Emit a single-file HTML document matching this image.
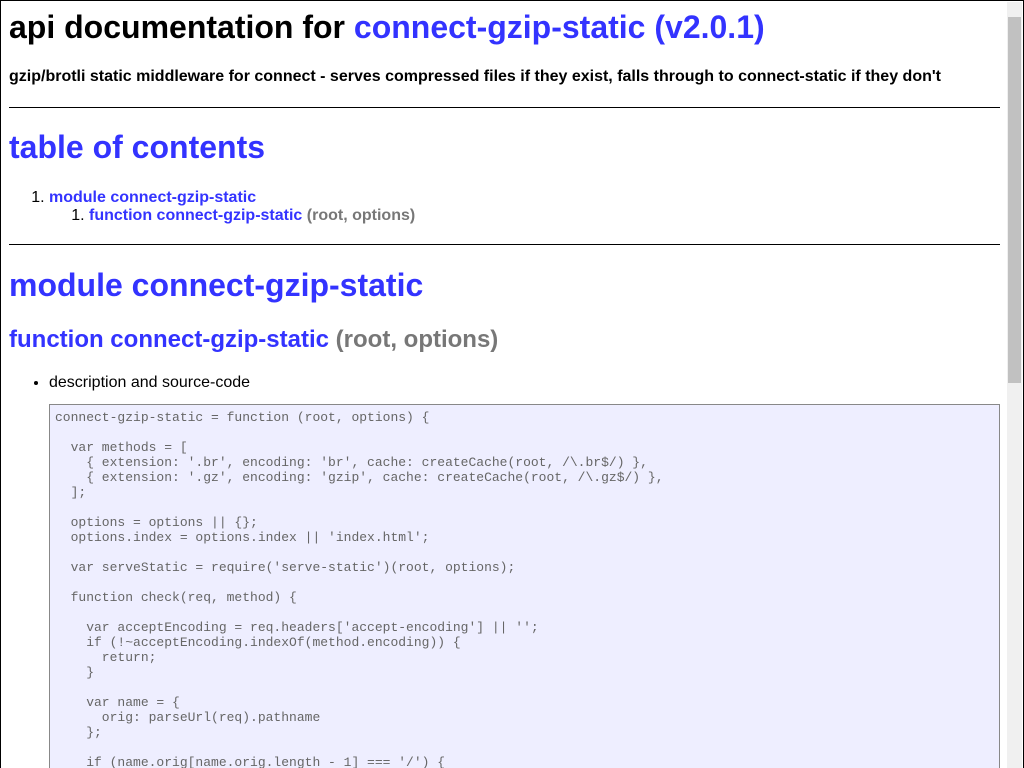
<!DOCTYPE html>
<html><head><meta charset="utf-8"><style>
html,body{margin:0;padding:0;overflow:hidden;background:#fff;width:1024px;height:768px}
#frame{position:absolute;left:0;top:0;width:1022px;height:767px;border:1px solid #000;border-bottom:none;overflow:hidden}
#content{position:absolute;left:8px;top:0;width:991px;font-family:"Liberation Sans",sans-serif;color:#000}
a{color:#33f;text-decoration:none;font-weight:bold}
.g{color:#777;font-weight:bold}
h1{font-size:32px;line-height:37px;margin:0;font-weight:bold}
.sub{font-size:16px;font-weight:bold;line-height:18px;margin:22px 0 0}
hr{border:none;border-top:1px solid #000;height:0;margin:0}
ol{margin:0;padding-left:40px;font-size:16px;font-weight:normal;line-height:18px}
h2{font-size:24px;line-height:28px;margin:22px 0 0;font-weight:bold}
ul{margin:20px 0 0;padding-left:40px;font-size:16px;line-height:18px}
pre{margin:12px 0 0 40px;background:#eef;border:1px solid #888;padding:5px 5px 4px;font-family:"Liberation Mono",monospace;font-size:13px;line-height:15px;color:#666;height:400px;overflow:hidden}
#sb{position:absolute;right:1px;top:1px;width:15px;height:767px;background:#f0f0f0}
#thumb{position:absolute;left:1px;top:15px;width:13px;height:366px;background:#c1c1c1}
</style></head><body><div id="frame">
<div id="content">
<h1 style="margin-top:8px">api documentation for <a>connect-gzip-static (v2.0.1)</a></h1>
<div class="sub">gzip/brotli static middleware for connect - serves compressed files if they exist, falls through to connect-static if they don't</div>
<hr style="margin-top:21px">
<h1 style="margin-top:21px"><a>table of contents</a></h1>
<ol style="margin-top:23px"><li><a>module connect-gzip-static</a><ol><li><a>function connect-gzip-static</a> <span class="g">(root, options)</span></li></ol></li></ol>
<hr style="margin-top:19px">
<h1 style="margin-top:22px"><a>module connect-gzip-static</a></h1>
<h2><a>function connect-gzip-static</a> <span class="g">(root, options)</span></h2>
<ul><li>description and source-code</li></ul>
<pre>connect-gzip-static = function (root, options) {

  var methods = [
    { extension: '.br', encoding: 'br', cache: createCache(root, /\.br$/) },
    { extension: '.gz', encoding: 'gzip', cache: createCache(root, /\.gz$/) },
  ];

  options = options || {};
  options.index = options.index || 'index.html';

  var serveStatic = require('serve-static')(root, options);

  function check(req, method) {

    var acceptEncoding = req.headers['accept-encoding'] || '';
    if (!~acceptEncoding.indexOf(method.encoding)) {
      return;
    }

    var name = {
      orig: parseUrl(req).pathname
    };

    if (name.orig[name.orig.length - 1] === '/') {
      name.compressed = name.orig;
</pre>
</div>
<div id="sb"><div id="thumb"></div></div>
</div></body></html>
